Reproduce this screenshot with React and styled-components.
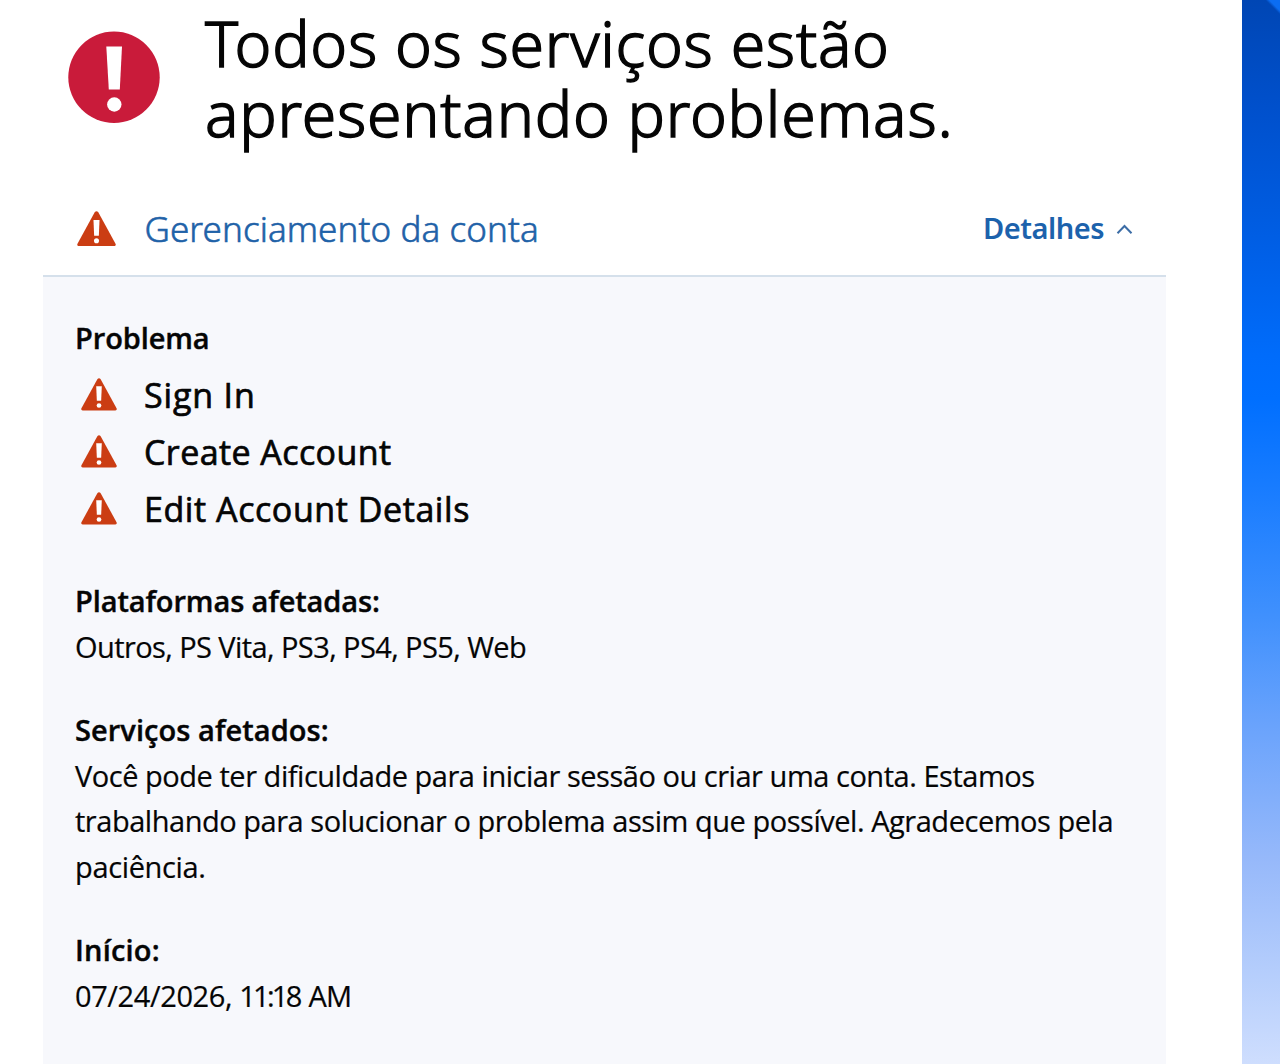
import React from "react";
import styled, { createGlobalStyle } from "styled-components";

const GlobalStyle = createGlobalStyle`
  *, *::before, *::after { box-sizing: border-box; }
  body {
    margin: 0;
    background: #fff;
    color: #050505;
    font-family: "Open Sans", "Noto Sans", sans-serif;
    overflow: hidden;
  }
  h1, h2, h3, p, ul { margin: 0; padding: 0; }
`;

const Page = styled.div`
  display: grid;
  grid-template-columns: 1242px 1fr;
  height: 1064px;
  overflow: hidden;
`;

const Main = styled.main`
  padding: 7px 76px 0 43px;
  background: #fff;
`;

const Backdrop = styled.aside`
  background:
    linear-gradient(to top right, transparent 48%, #0b6df2 62%) 100% 0 / 14px 14px no-repeat,
    linear-gradient(
      180deg,
      #0046b4 0%,
      #0050cc 10%,
      #005fe6 23%,
      #006cfb 33%,
      #006fff 37%,
      #1a7dff 46%,
      #3f90fd 57%,
      #6ca4fc 68%,
      #97b9fa 80%,
      #b4cdfc 90%,
      #d2e0fe 100%
    );
`;

const Hero = styled.header`
  display: flex;
  align-items: flex-start;
  gap: 45px;
  height: 175px;
  padding: 0 0 0 25px;
`;

const HeroIcon = styled.svg`
  flex: none;
  width: 92px;
  height: 92px;
  margin-top: 24px;
`;

const Title = styled.h1`
  padding-top: 1px;
  font-family: "Noto Sans", "Open Sans", sans-serif;
  font-size: 62.5px;
  font-weight: 300;
  line-height: 69.7px;
  -webkit-text-stroke: 1.4px currentColor;
`;

const Line = styled.span`
  display: block;
  white-space: nowrap;
  letter-spacing: ${(p) => p.$track || 0}px;
`;

const Run = styled.span`
  letter-spacing: ${(p) => p.$track}px;
`;

const AccountRow = styled.div`
  display: flex;
  align-items: center;
  height: 95px;
  padding: 1px 32px 1px 34px;
  border-bottom: 2px solid #d5e0eb;
  color: #1f62a8;
`;

const AccountName = styled.h2`
  margin-left: 28.5px;
  font-family: "Noto Sans", "Open Sans", sans-serif;
  font-size: 35px;
  font-weight: 300;
  line-height: 48px;
  letter-spacing: 0.09px;
  white-space: nowrap;
  -webkit-text-stroke: 0.6px currentColor;
`;

const DetailsToggle = styled.button`
  display: flex;
  align-items: center;
  gap: 12px;
  margin: 0 1px 1px auto;
  padding: 0;
  border: 0;
  background: none;
  color: #1c62ac;
  font: 600 29px/46px "Noto Sans", "Open Sans", sans-serif;
  letter-spacing: -0.5px;
`;

const Chevron = styled.svg`
  width: 17px;
  height: 12px;
  margin-top: 2px;
`;

const Panel = styled.section`
  height: 800px;
  padding: 38px 32px 0;
  background: #f7f8fc;
`;

const Label = styled.h3`
  font-size: 29px;
  font-weight: 600;
  line-height: 45.7px;
  letter-spacing: ${(p) => p.$track ?? -0.11}px;
  -webkit-text-stroke: 0.4px currentColor;
`;

const IssueList = styled.ul`
  margin: 6.3px 0 40px;
  list-style: none;
`;

const Issue = styled.li`
  display: flex;
  align-items: center;
  gap: 27px;
  height: 57px;
  padding-left: 6px;
  font-size: 34px;
  line-height: 57px;
  -webkit-text-stroke: 0.7px currentColor;

  svg {
    margin-bottom: 2px;
  }
`;

const Triangle = styled.svg`
  flex: none;
  width: ${(p) => p.$size}px;
  height: ${(p) => p.$size * 0.9}px;
`;

const Block = styled.section`
  margin-bottom: 37.6px;
`;

const Copy = styled.p`
  font-size: 29px;
  line-height: 45.7px;
  -webkit-text-stroke: 0.2px currentColor;
`;

function Warning({ size }) {
  return (
    <Triangle $size={size} viewBox="0 0 40 36" strokeWidth="0" aria-hidden="true">
      <path
        d="M18.3 1.1Q20 -0.7 21.7 1.1L39.5 33.6Q40.4 35.8 38.2 36H1.8Q-0.4 35.8 0.5 33.6Z"
        fill="#cb3d13"
      />
      <path d="M16.9 9.2H23.1L22.4 25.4H17.6Z" fill="#fff" />
      <circle cx="20" cy="30.6" r="2.6" fill="#fff" />
    </Triangle>
  );
}

const issues = [
  { name: "Sign In", track: 0.85 },
  { name: "Create Account", track: 0.42 },
  { name: "Edit Account Details", track: 0.57 },
];

const blocks = [
  {
    label: "Plataformas afetadas:",
    lines: [[["Outros, PS Vita, PS3, PS4, PS5, Web", -0.58]]],
  },
  {
    label: "Serviços afetados:",
    track: 0.06,
    lines: [
      [["Você pode ter dificuldade para iniciar sessão ou criar uma conta. Estamos", -0.47]],
      [["trabalhando para solucionar o problema assim que possível. Agradecemos pela", -0.465]],
      [["paciência.", -0.35]],
    ],
  },
  {
    label: "Início:",
    track: 0.2,
    lines: [[["07/24/2026, ", -0.4], ["11:1", -2.7], ["8 AM", -0.7]]],
  },
];

export default function App() {
  return (
    <>
      <GlobalStyle />
      <Page>
        <Main>
          <Hero>
            <HeroIcon viewBox="0 0 92 92" aria-hidden="true">
              <circle cx="46" cy="46.3" r="45.7" fill="#c91b3a" />
              <path d="M38.3 15.5H54L51.8 58.5H40.8Z" fill="#fff" />
              <circle cx="46.3" cy="73.5" r="7.2" fill="#fff" />
            </HeroIcon>
            <Title>
              <Line $track={0.73}>Todos os serviços estão</Line>
              <Line $track={0.78}>apresentando problemas.</Line>
            </Title>
          </Hero>
          <AccountRow>
            <Warning size={39} />
            <AccountName>Gerenciamento da conta</AccountName>
            <DetailsToggle type="button">
              Detalhes
              <Chevron viewBox="0 0 17 12" aria-hidden="true">
                <path d="M1.5 10.2L8.5 3L15.5 10.2" fill="none" stroke="#3c6da6" strokeWidth="2" />
              </Chevron>
            </DetailsToggle>
          </AccountRow>
          <Panel>
            <Label>Problema</Label>
            <IssueList>
              {issues.map((issue) => (
                <Issue key={issue.name}>
                  <Warning size={36} />
                  <Line $track={issue.track}>{issue.name}</Line>
                </Issue>
              ))}
            </IssueList>
            {blocks.map((block) => (
              <Block key={block.label}>
                <Label $track={block.track}>{block.label}</Label>
                <Copy>
                  {block.lines.map((runs) => (
                    <Line key={runs[0][0]}>
                      {runs.map(([text, track]) => (
                        <Run key={text} $track={track}>{text}</Run>
                      ))}
                    </Line>
                  ))}
                </Copy>
              </Block>
            ))}
          </Panel>
        </Main>
        <Backdrop />
      </Page>
    </>
  );
}
